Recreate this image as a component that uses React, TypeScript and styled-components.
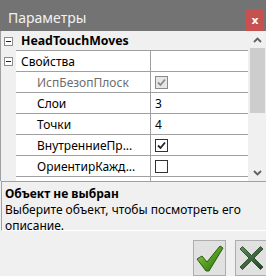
import styled, { createGlobalStyle } from 'styled-components';

const GlobalStyle = createGlobalStyle`
  html, body {
    margin: 0;
    padding: 0;
    background: #f0f0f0;
  }
  body {
    font-family: 'Noto Sans', 'Liberation Sans', sans-serif;
    font-size: 12px;
    color: #000;
  }
`;

interface RowData {
  label: string;
  value?: string;
  check?: 'on' | 'off' | 'disabled';
  disabled?: boolean;
}

const rows: RowData[] = [
  { label: 'ИспБезопПлоск', check: 'disabled', disabled: true },
  { label: 'Слои', value: '3' },
  { label: 'Точки', value: '4' },
  { label: 'ВнутренниеПр...', check: 'on' },
  { label: 'ОриентирКажд...', check: 'off' },
  { label: '', check: 'off' },
];

export default function App() {
  return (
    <Window>
      <GlobalStyle />
      <TitleBar>
        <Title>Параметры</Title>
        <CloseButton>x</CloseButton>
      </TitleBar>

      <GridArea>
        <Grid>
          <HeaderRow>
            <Margin>
              <Toggle />
            </Margin>
            <HeaderLabel>HeadTouchMoves</HeaderLabel>
          </HeaderRow>

          <Row>
            <Margin>
              <Toggle />
            </Margin>
            <Label>Свойства</Label>
            <Value />
          </Row>

          {rows.map((r, i) => (
            <Row key={i}>
              <Margin />
              <Label indent disabled={r.disabled}>
                {r.label}
              </Label>
              <Value>
                {r.check ? <CheckBox state={r.check} /> : r.value}
              </Value>
            </Row>
          ))}
        </Grid>

        <Scrollbar>
          <Arrow>
            <svg width='9' height='6' viewBox='0 0 9 6'>
              <path d='M1 5 L4.5 1.5 L8 5' fill='none' stroke='#606060' strokeWidth='1.8' />
            </svg>
          </Arrow>
          <Thumb />
          <Track />
          <Arrow>
            <svg width='9' height='6' viewBox='0 0 9 6'>
              <path d='M1 1 L4.5 4.5 L8 1' fill='none' stroke='#606060' strokeWidth='1.8' />
            </svg>
          </Arrow>
        </Scrollbar>
      </GridArea>

      <Description>
        <b>Объект не выбран</b>
        <p>Выберите объект, чтобы посмотреть его описание.</p>
      </Description>

      <Footer>
        <IconButton>
          <svg width='31' height='32' viewBox='0 0 31 32'>
            <defs>
              <linearGradient id='okg' x1='0' y1='0' x2='1' y2='1'>
                <stop offset='0' stopColor='#a6dc62' />
                <stop offset='0.45' stopColor='#5aa523' />
                <stop offset='1' stopColor='#2a680c' />
              </linearGradient>
            </defs>
            <path
              d='M3 17 L8 14 L13 20 L26 4 L29 6 L15 29 L12 29 Z'
              fill='url(#okg)'
              stroke='#2a5a12'
              strokeWidth='1'
              strokeLinejoin='round'
            />
          </svg>
        </IconButton>
        <IconButton>
          <svg width='31' height='32' viewBox='0 0 31 32'>
            <defs>
              <linearGradient id='nog' x1='0' y1='0' x2='1' y2='1'>
                <stop offset='0' stopColor='#5e8e5e' />
                <stop offset='1' stopColor='#1f451f' />
              </linearGradient>
            </defs>
            <path
              d='M4 7 L6.5 4.5 L15.5 13.5 L24.5 4.5 L27 7 L18 16 L27 25 L24.5 27.5 L15.5 18.5 L6.5 27.5 L4 25 L13 16 Z'
              fill='url(#nog)'
              stroke='#1d3d1d'
              strokeWidth='0.8'
              strokeLinejoin='round'
            />
          </svg>
        </IconButton>
      </Footer>
    </Window>
  );
}

function CheckBox({ state }: { state: 'on' | 'off' | 'disabled' }) {
  return (
    <Box disabled={state === 'disabled'}>
      {state !== 'off' && (
        <svg width='9' height='9' viewBox='0 0 9 9'>
          <path
            d='M1 4.5 L3.5 7 L8 1.5'
            fill='none'
            stroke={state === 'disabled' ? '#8a8a8a' : '#222'}
            strokeWidth='1.8'
          />
        </svg>
      )}
    </Box>
  );
}

const Window = styled.div`
  width: 266px;
  height: 276px;
  overflow: hidden;
  display: flex;
  flex-direction: column;
  background: #f0f0f0;
`;

const TitleBar = styled.div`
  height: 31px;
  flex: none;
  display: flex;
  align-items: center;
  background: #737373;
  padding-left: 8px;
  box-sizing: border-box;
`;

const Title = styled.div`
  color: #f2f2f2;
  font-size: 14px;
  padding-top: 4px;
`;

const CloseButton = styled.div`
  margin-left: auto;
  margin-right: 2px;
  align-self: flex-end;
  width: 18px;
  height: 22px;
  display: flex;
  align-items: center;
  justify-content: center;
  background: #c75050;
  color: #fff;
  font-weight: bold;
  font-size: 11px;
  font-family: 'DejaVu Sans', sans-serif;
`;

const GridArea = styled.div`
  height: 150px;
  flex: none;
  display: flex;
  overflow: hidden;
  border-left: 1px solid #a0a0a0;
`;

const Grid = styled.div`
  width: 247px;
  display: flex;
  flex-direction: column;
  background: #fff;
`;

const Row = styled.div`
  display: grid;
  grid-template-columns: 15px 134px 1fr;
  height: 21px;
  flex: none;
`;

const HeaderRow = styled(Row)`
  grid-template-columns: 15px 1fr;
  height: 20px;
  background: #f0f0f0;
`;

const Margin = styled.div`
  background: #f0f0f0;
  display: flex;
  align-items: center;
  padding-left: 3px;
`;

const Toggle = styled.div`
  width: 7px;
  height: 7px;
  border: 1px solid #8c8c8c;
  background: #fff;
  position: relative;

  &::after {
    content: '';
    position: absolute;
    left: 1px;
    right: 1px;
    top: 3px;
    height: 1px;
    background: #222;
  }
`;

const HeaderLabel = styled.div`
  font-weight: bold;
  font-size: 12.3px;
  padding-left: 5px;
  display: flex;
  align-items: center;
  border-bottom: 1px solid #a0a0a0;
`;

const Label = styled.div<{ indent?: boolean; disabled?: boolean }>`
  display: flex;
  align-items: center;
  padding-left: ${(p) => (p.indent ? '21px' : '5px')};
  border-bottom: 1px solid #a0a0a0;
  color: ${(p) => (p.disabled ? '#6d6d6d' : '#000')};
  white-space: nowrap;
  overflow: hidden;
`;

const Value = styled.div`
  display: flex;
  align-items: center;
  padding-left: 4px;
  border-left: 1px solid #a0a0a0;
  border-bottom: 1px solid #a0a0a0;
`;

const Box = styled.div<{ disabled?: boolean }>`
  width: 11px;
  height: 11px;
  border: 1px solid ${(p) => (p.disabled ? '#8a8a8a' : '#333')};
  background: ${(p) => (p.disabled ? '#e6e6e6' : '#fff')};
  display: flex;
  align-items: center;
  justify-content: center;
`;

const Scrollbar = styled.div`
  width: 18px;
  display: flex;
  flex-direction: column;
  align-items: center;
  background: #f0f0f0;
`;

const Arrow = styled.div`
  height: 17px;
  flex: none;
  display: flex;
  align-items: center;
  justify-content: center;
`;

const Thumb = styled.div`
  width: 15px;
  height: 65px;
  background: #cdcdcd;
`;

const Track = styled.div`
  flex: 1;
`;

const Description = styled.div`
  height: 50px;
  flex: none;
  margin-left: 1px;
  padding: 4px 3px 0;
  box-sizing: border-box;
  border-top: 1px solid #a0a0a0;
  border-left: 1px solid #a0a0a0;
  border-bottom: 1px solid #fff;
  line-height: 16px;

  b {
    display: block;
  }

  p {
    margin: 0;
  }
`;

const Footer = styled.div`
  display: flex;
  justify-content: flex-end;
  gap: 9px;
  padding-top: 9px;
  margin-right: -2px;
`;

const IconButton = styled.div`
  width: 31px;
  height: 34px;
  flex: none;
  display: flex;
  align-items: center;
  justify-content: center;
  background: #e1e1e1;
  border: 1px solid #adadad;
`;
